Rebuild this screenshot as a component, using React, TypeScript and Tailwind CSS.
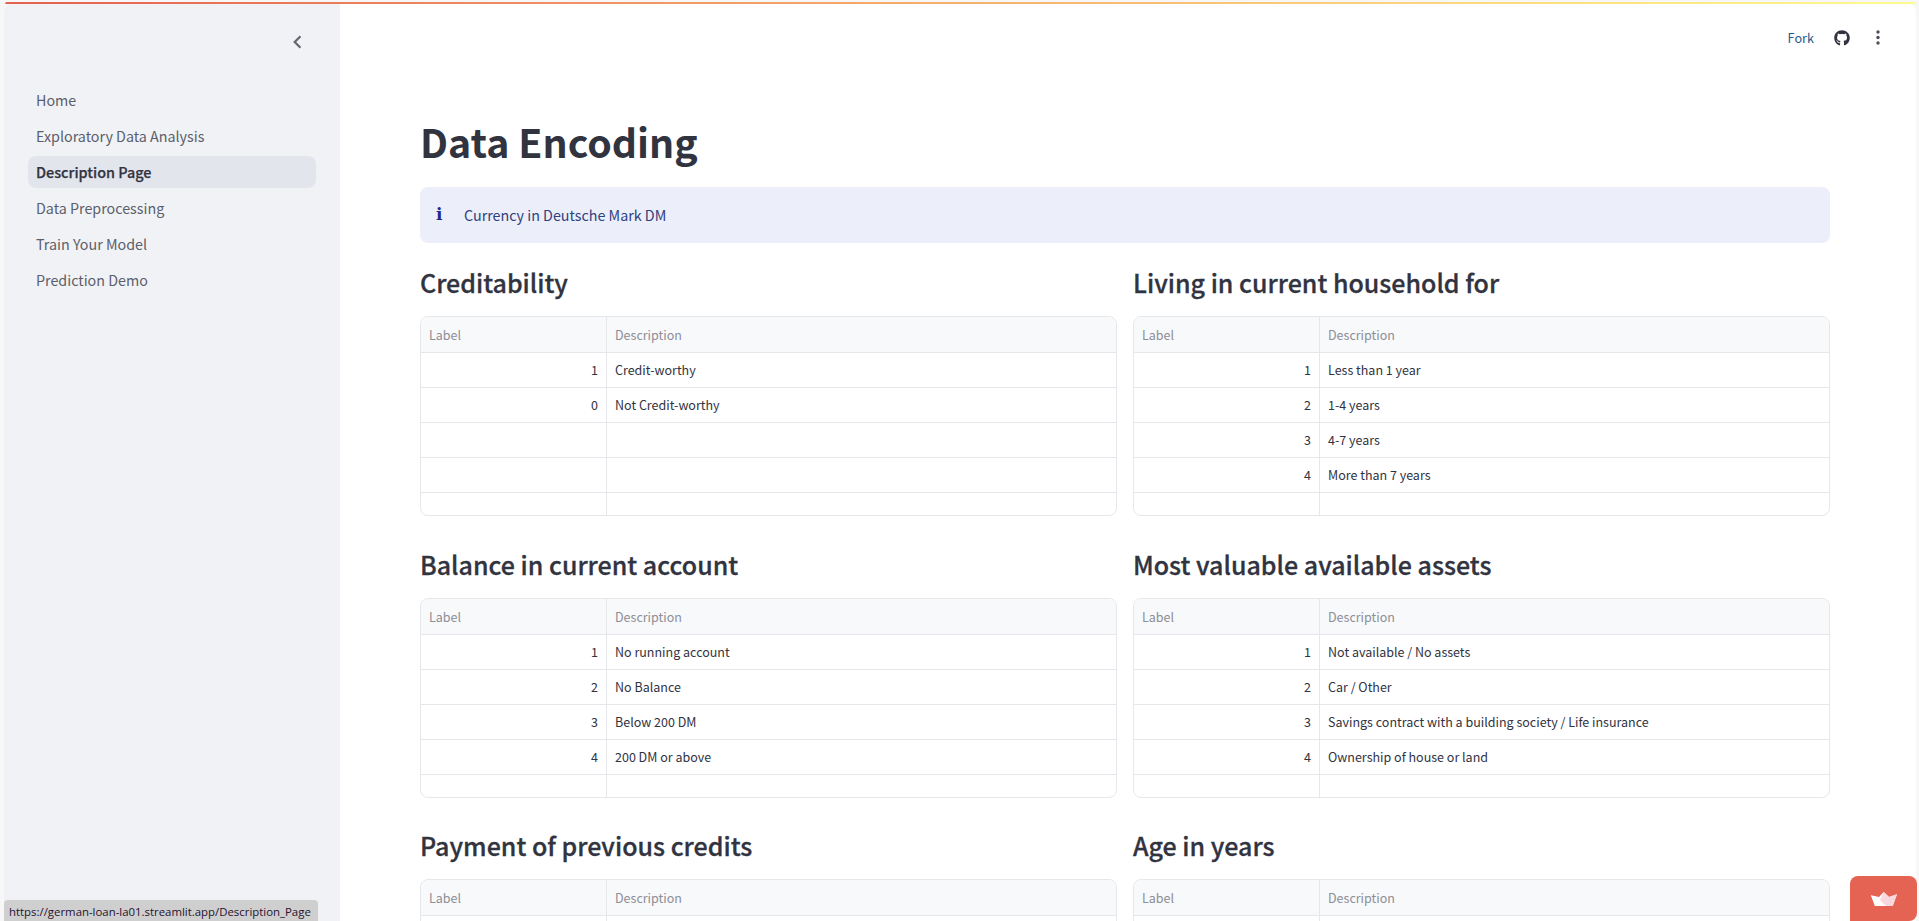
import { FaGithub } from "react-icons/fa";

const font = "font-['Noto_Sans_CJK_SC','Noto_Sans',sans-serif]";

const nav = ["Home", "Exploratory Data Analysis", "Description Page", "Data Preprocessing", "Train Your Model", "Prediction Demo"];

type Row = [string, string];
const sections: { title: string; rows: Row[] }[] = [
  { title: "Creditability", rows: [["1", "Credit-worthy"], ["0", "Not Credit-worthy"], ["", ""], ["", ""], ["", ""]] },
  { title: "Living in current household for", rows: [["1", "Less than 1 year"], ["2", "1-4 years"], ["3", "4-7 years"], ["4", "More than 7 years"], ["", ""]] },
  { title: "Balance in current account", rows: [["1", "No running account"], ["2", "No Balance"], ["3", "Below 200 DM"], ["4", "200 DM or above"], ["", ""]] },
  { title: "Most valuable available assets", rows: [["1", "Not available / No assets"], ["2", "Car / Other"], ["3", "Savings contract with a building society / Life insurance"], ["4", "Ownership of house or land"], ["", ""]] },
  { title: "Payment of previous credits", rows: [["", ""]] },
  { title: "Age in years", rows: [["", ""]] },
];

function Table({ rows }: { rows: Row[] }) {
  return (
    <div className="h-[200px] overflow-hidden rounded-lg border border-[#e6e7ea] text-[12.5px]">
      <div className="flex h-[36px] border-b border-[#e6e7ea] bg-[#f8f9fb] leading-[35px] text-[#8d8e96]">
        <div className="w-[186px] shrink-0 border-r border-[#e6e7ea] px-2">Label</div>
        <div className="flex-1 px-2">Description</div>
      </div>
      {rows.map((r, i) => (
        <div key={i} className="flex h-[35px] border-b border-[#e6e7ea] leading-[34px] text-[#31333f] last:border-b-0">
          <div className="w-[186px] shrink-0 border-r border-[#e6e7ea] px-2 text-right">{r[0]}</div>
          <div className="flex-1 px-2">{r[1]}</div>
        </div>
      ))}
    </div>
  );
}

export default function App() {
  return (
    <div className={`relative h-[921px] overflow-hidden bg-[#f7f7f7] ${font}`}>
      <div className="ml-[5px] mr-[3px] mt-[2px] h-[2px] rounded-t-sm bg-gradient-to-r from-[#e4604f] to-[#fdfb8e]" />
      <div className="ml-1 mr-[3px] flex h-[917px] overflow-hidden rounded-t-lg bg-white">
        <aside className="flex w-[336px] shrink-0 flex-col bg-[#f0f2f6] px-6">
          <div className="flex h-[80px] justify-end pr-[8px] pt-[29px]">
            <svg width="20" height="18" viewBox="0 0 24 22" fill="none" stroke="#676872" strokeWidth="2.8">
              <path d="M15 4l-7 7 7 7" />
            </svg>
          </div>
          <nav className="flex flex-col gap-1">
            {nav.map((n) => (
              <div
                key={n}
                className={`h-8 rounded-lg px-2 leading-8 ${n === "Description Page" ? "bg-[#e3e5ec] text-[14.4px] font-medium text-[#31333f] [-webkit-text-stroke:0.25px_#31333f]" : "text-[14.3px] text-[#5c5e6a]"}`}
              >
                {n}
              </div>
            ))}
          </nav>
        </aside>
        <main className="min-w-0 flex-1">
          <div className="flex h-[68px] items-center justify-end pr-[36px] pb-[1px]">
            <span className="text-[12.7px] text-[#2b5a8c]">Fork</span>
            <FaGithub className="ml-[20px] text-[16px] text-[#31333f]" />
            <svg width="4" height="15" viewBox="0 0 4 15" fill="#4d4f5a" className="ml-[26px]">
              <circle cx="2" cy="2" r="1.7" />
              <circle cx="2" cy="7.5" r="1.7" />
              <circle cx="2" cy="13" r="1.7" />
            </svg>
          </div>
          <div className="pl-20 pr-[86px]">
            <h1 className="mt-[33px] h-[82px] text-[39.3px] font-bold leading-[72px] text-[#31333f]">Data Encoding</h1>
            <div className="flex h-14 items-center rounded-lg bg-[#eceff9] px-4 text-[14.3px] text-[#30407f]">
              <span className="w-7 font-['DejaVu_Serif',serif] text-[17px] font-bold text-[#1c2a8c]">i</span>
              <span>Currency in Deutsche Mark DM</span>
            </div>
            <div className="mt-4 grid grid-cols-2 gap-x-4 gap-y-[24.5px]">
              {sections.map((s) => (
                <section key={s.title}>
                  <h2 className="mb-[9px] h-[48px] text-[25px] font-medium leading-[47px] text-[#31333f] [-webkit-text-stroke:0.3px_#31333f]">{s.title}</h2>
                  <Table rows={s.rows} />
                </section>
              ))}
            </div>
          </div>
        </main>
      </div>
      <div className="absolute bottom-0 left-1 h-[21px] rounded-t bg-[#cfcfcf] pl-[5px] pr-[7px] font-['Open_Sans',sans-serif] text-[11.4px] leading-[23px] text-[#1f1230]">
        https://german-loan-la01.streamlit.app/Description_Page
      </div>
      <div className="absolute bottom-0 right-[2px] flex h-[45px] w-[67px] items-start justify-center rounded-lg rounded-bl-none bg-[#e56353] pt-[16px]">
        <svg width="26" height="14" viewBox="0 0 26 14">
          <path d="M0 3.3L8 5 12.7 0 18 5l8-2.7L21.7 14H4z" fill="#fff" />
          <path d="M12.7 0L18 5l8-2.7L21.7 14H15L9 8z" fill="#f8d7dd" />
          <path d="M4 14L0 3.3 15 14z" fill="#fff" />
        </svg>
      </div>
    </div>
  );
}
